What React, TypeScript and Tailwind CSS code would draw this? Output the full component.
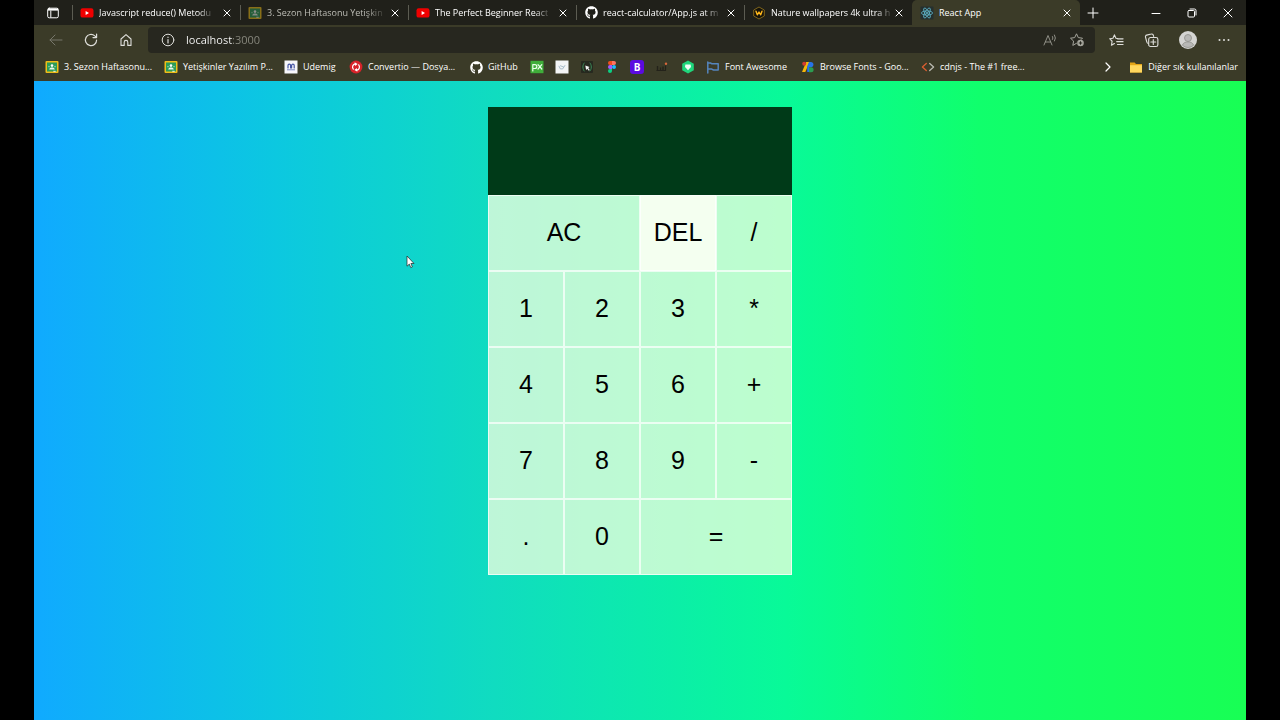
import type { ReactNode } from "react";
import { useState } from "react";
import { FaGithub } from "react-icons/fa";

const stroke = {
  fill: "none",
  stroke: "currentColor",
  strokeLinecap: "round" as const,
  strokeLinejoin: "round" as const,
};

function YoutubeIcon() {
  return (
    <svg viewBox="0 0 14 14" className="size-[14px]">
      <rect x="0.5" y="2.2" width="13" height="9.4" rx="2.2" fill="#f00000" />
      <path d="M5.6 4.9v4l3.4-2z" fill="#fff" />
    </svg>
  );
}

function ClassroomIcon() {
  return (
    <svg viewBox="0 0 14 14" className="size-[14px]">
      <rect x="0.5" y="1" width="13" height="12" rx="1" fill="#f0bd18" />
      <rect x="2" y="2.5" width="10" height="9" fill="#2b9b59" />
      <circle cx="7" cy="5.6" r="1.3" fill="#fff" />
      <path d="M4.2 9.6c0-1.6 1.4-2.2 2.8-2.2s2.8.6 2.8 2.2z" fill="#e8f5e9" />
      <circle cx="4" cy="6.6" r="0.8" fill="#8fd0a5" />
      <circle cx="10" cy="6.6" r="0.8" fill="#8fd0a5" />
      <path d="M8.3 10.8h2.4v.9H8.3z" fill="#fff" />
    </svg>
  );
}

function WallpaperIcon() {
  return (
    <svg viewBox="0 0 14 14" className="size-[14px]">
      <path d="M7 1l5.3 3v6L7 13l-5.3-3V4z" fill="#15130c" stroke="#8a6d1c" strokeWidth="0.9" />
      <path d="M4 5.2l1.300 3.600L7 6l1.700 2.800L10 5.200" {...stroke} stroke="#ffb81c" strokeWidth="1.4" />
    </svg>
  );
}

function ReactIcon() {
  return (
    <svg viewBox="0 0 14 14" className="size-[14px]" fill="none" stroke="#61b8cc" strokeWidth="0.8">
      <rect x="0.5" y="0.5" width="13" height="13" rx="1" fill="#25302f" stroke="none" />
      <ellipse cx="7" cy="7" rx="5.6" ry="2.1" />
      <ellipse cx="7" cy="7" rx="5.6" ry="2.1" transform="rotate(60 7 7)" />
      <ellipse cx="7" cy="7" rx="5.6" ry="2.1" transform="rotate(120 7 7)" />
      <circle cx="7" cy="7" r="1" fill="#61b8cc" stroke="none" />
    </svg>
  );
}

function UdemigIcon() {
  return (
    <svg viewBox="0 0 14 14" className="size-[14px]">
      <rect x="0.5" y="0.5" width="13" height="13" fill="#f7f7fb" />
      <path d="M4 8V5.500a1.300 1.300 0 0 1 2.600 0V8M7.600 8V5.500a1.300 1.300 0 0 1 2.600 0V8" {...stroke} stroke="#4656a5" strokeWidth="1.2" />
      <path d="M3 9.800h8" stroke="#7e8bc8" strokeWidth="1" />
    </svg>
  );
}

function ConvertioIcon() {
  return (
    <svg viewBox="0 0 14 14" className="size-[14px]">
      <circle cx="7" cy="7" r="6.4" fill="#d8232a" />
      <path d="M4.3 9.2A3.4 3.4 0 0 1 6 3.8M9.7 4.8A3.4 3.4 0 0 1 8 10.2" {...stroke} stroke="#fff" strokeWidth="1.2" />
      <path d="M5.6 2.3L8.6 4 6.3 6zM8.4 11.7L5.4 10l2.3-2z" fill="#fff" />
    </svg>
  );
}

function PxIcon() {
  return (
    <svg viewBox="0 0 14 14" className="size-[14px]">
      <rect x="0.5" y="0.8" width="13" height="12.4" fill="#3fae3a" />
      <path d="M2.8 11V4.6h2.1a1.9 1.9 0 0 1 0 3.900H3M8 4.600l3.800 4.400M11.800 4.600L8 9" {...stroke} stroke="#eaffea" strokeWidth="1.2" />
    </svg>
  );
}

function SketchIcon() {
  return (
    <svg viewBox="0 0 14 14" className="size-[14px]">
      <rect x="0.5" y="0.5" width="13" height="13" fill="#f3f5f6" />
      <path d="M4 6.2l1.3 2.7h2.4l2.2-3.400M5.500 5.800l3 1.200" {...stroke} stroke="#9eb6c4" strokeWidth="0.9" />
    </svg>
  );
}

function BracketIcon() {
  return (
    <svg viewBox="0 0 14 14" className="size-[14px]">
      <rect x="1" y="1" width="12" height="12" rx="1" fill="#26291f" />
      <path d="M4.2 3C2.4 5 2.4 9 4.2 11M10 3c1.8 2 1.8 6 0 8" {...stroke} stroke="#3c8a58" strokeWidth="1" />
      <path d="M5.3 5.5l4.300 1.600-1.400.9 1.600 2-1 .8-1.500-2-1.200 1.200z" fill="#f5f5f5" />
    </svg>
  );
}

function FigmaIcon() {
  return (
    <svg viewBox="0 0 14 14" className="size-[14px]">
      <path d="M7 1H5a2 2 0 0 0 0 4h2z" fill="#f24e1e" />
      <path d="M7 1h2a2 2 0 0 1 0 4H7z" fill="#ff7262" />
      <path d="M7 5H5a2 2 0 0 0 0 4h2z" fill="#a259ff" />
      <circle cx="9" cy="7" r="2" fill="#1abcfe" />
      <path d="M7 9H5a2 2 0 1 0 2 2z" fill="#0acf83" />
    </svg>
  );
}

function BootstrapIcon() {
  return (
    <span className="flex size-[14px] items-center justify-center rounded-[3px] bg-[#5b0be0] text-[10px] font-bold text-white">
      B
    </span>
  );
}

function StatsIcon() {
  return (
    <svg viewBox="0 0 14 14" className="size-[14px]">
      <path d="M2.5 6v4.5M5.5 7.5v3M8 6.5v4" stroke="#23221a" strokeWidth="1.4" />
      <path d="M2 10.5h8.5V6" {...stroke} stroke="#23221a" strokeWidth="1.2" />
      <circle cx="11" cy="3.8" r="1.2" fill="#d9683b" />
    </svg>
  );
}

function HexIcon() {
  return (
    <svg viewBox="0 0 14 14" className="size-[14px]">
      <path d="M7 .5l5.8 3.2v6.600L7 13.500l-5.800-3.200V3.700z" fill="#1fd67c" />
      <path d="M4.400 4.500h5.200L10 7l-3 3.200L4 7z" fill="#f2fff8" />
    </svg>
  );
}

function FlagIcon() {
  return (
    <svg viewBox="0 0 14 14" className="size-[14px]">
      <path d="M1.800 2v11M1.800 3h2.700l1.500.8h6.200v6.200H7.500l-1.800-.9H1.800" {...stroke} stroke="#5585bd" strokeWidth="1.500" />
    </svg>
  );
}

function GoogleFontsIcon() {
  return (
    <svg viewBox="0 0 14 14" className="size-[14px]">
      <path d="M5.200 2h3.300L4.300 12H1z" fill="#f5b70a" />
      <circle cx="3.200" cy="3.800" r="2" fill="#d43c2e" />
      <path d="M8 2h1.800a2.600 2.600 0 0 1 0 5.200H8z" fill="#2773e8" />
      <path d="M8 2v10H6.200V6.200z" fill="#2773e8" />
      <path d="M8 7.200h2.100a2.500 2.500 0 0 1 0 5H8z" fill="#2c9c51" />
    </svg>
  );
}

function CdnjsIcon() {
  return (
    <svg viewBox="0 0 14 14" className="size-[14px]">
      <path d="M5.3 3.4L1.4 7l3.9 3.6" {...stroke} stroke="#d95e31" strokeWidth="1.3" />
      <path d="M8.7 3.4L12.6 7l-3.9 3.6" {...stroke} stroke="#b9b9b0" strokeWidth="1.3" />
    </svg>
  );
}

function FolderIcon() {
  return (
    <svg viewBox="0 0 14 14" className="size-[14px]">
      <path d="M1 2.5h4.6L7 4h6v8.5H1z" fill="#e3a417" />
      <path d="M1 5.2h12v7.3H1z" fill="#ffd75e" />
    </svg>
  );
}

function GithubIcon() {
  return <FaGithub className="size-[13px] text-white" />;
}

function CloseIcon() {
  return (
    <svg viewBox="0 0 10 10" className="size-[10px]">
      <path d="M2 2l6 6M8 2L2 8" {...stroke} />
    </svg>
  );
}

const tabs: { title: string; icon: ReactNode; dim?: boolean; active?: boolean }[] = [
  { title: "Javascript reduce() Metodu", icon: <YoutubeIcon /> },
  { title: "3. Sezon Haftasonu Yetişkin", icon: <ClassroomIcon />, dim: true },
  { title: "The Perfect Beginner React", icon: <YoutubeIcon /> },
  { title: "react-calculator/App.js at m", icon: <GithubIcon /> },
  { title: "Nature wallpapers 4k ultra h", icon: <WallpaperIcon /> },
  { title: "React App", icon: <ReactIcon />, active: true },
];

const bookmarks: { label?: string; name: string; icon: ReactNode; width: string }[] = [
  { label: "3. Sezon Haftasonu...", name: "3. Sezon Haftasonu", icon: <ClassroomIcon />, width: "w-[119px]" },
  { label: "Yetişkinler Yazılım P...", name: "Yetişkinler Yazılım", icon: <ClassroomIcon />, width: "w-[120px]" },
  { label: "Udemig", name: "Udemig", icon: <UdemigIcon />, width: "w-[65px]" },
  { label: "Convertio — Dosya...", name: "Convertio", icon: <ConvertioIcon />, width: "w-[120px]" },
  { label: "GitHub", name: "GitHub", icon: <GithubIcon />, width: "w-[61px]" },
  { name: "Pixel", icon: <PxIcon />, width: "w-[25px]" },
  { name: "Sketch", icon: <SketchIcon />, width: "w-[25px]" },
  { name: "Code", icon: <BracketIcon />, width: "w-[25px]" },
  { name: "Figma", icon: <FigmaIcon />, width: "w-[25px]" },
  { name: "Bootstrap", icon: <BootstrapIcon />, width: "w-[25px]" },
  { name: "Stats", icon: <StatsIcon />, width: "w-[26px]" },
  { name: "Hex", icon: <HexIcon />, width: "w-[25px]" },
  { label: "Font Awesome", name: "Font Awesome", icon: <FlagIcon />, width: "w-[95px]" },
  { label: "Browse Fonts - Goo...", name: "Google Fonts", icon: <GoogleFontsIcon />, width: "w-[120px]" },
  { label: "cdnjs - The #1 free...", name: "cdnjs", icon: <CdnjsIcon />, width: "w-[120px]" },
];

function TabStrip() {
  return (
    <div className="flex h-[25px] items-stretch bg-[#20201a]">
      <button aria-label="Tab actions" className="flex w-[38px] items-center justify-center">
        <svg viewBox="0 0 14 14" className="size-[14px] text-white">
          <rect x="1.700" y="2.200" width="10.600" height="9.600" rx="1.500" {...stroke} />
          <path d="M2 3.600h10" stroke="currentColor" strokeWidth="2" />
          <path d="M4.800 4.500v7" stroke="currentColor" />
        </svg>
      </button>
      <div className="flex min-w-0" role="tablist">
        {tabs.map((tab) => (
          <div
            key={tab.title}
            className={
              tab.active
                ? "flex w-[168px] items-center rounded-t-[5px] bg-[#3b3b28] px-2"
                : "flex w-[168px] items-center bg-[linear-gradient(#5c5c52,#5c5c52)] bg-[size:1px_15px] bg-[position:0_50%] bg-no-repeat px-2"
            }
          >
            <button role="tab" aria-selected={!!tab.active} className="flex min-w-0 flex-1 items-center gap-[5px] text-left">
              <span className={tab.dim ? "flex w-[14px] shrink-0 justify-center opacity-50" : "flex w-[14px] shrink-0 justify-center"}>
                {tab.icon}
              </span>
              <span
                className={
                  tab.dim
                    ? "whitespace-nowrap text-[#bdbdb6] [mask-image:linear-gradient(to_right,#000_85%,#0003)]"
                    : tab.active
                      ? "whitespace-nowrap text-white"
                      : "whitespace-nowrap text-white [mask-image:linear-gradient(to_right,#000_88%,#0003)]"
                }
              >
                {tab.title}
              </span>
            </button>
            <button aria-label={`Close ${tab.title}`} className="shrink-0 text-white">
              <CloseIcon />
            </button>
          </div>
        ))}
      </div>
      <button aria-label="New tab" className="flex w-[26px] items-center justify-center text-white">
        <svg viewBox="0 0 12 12" className="size-[12px]">
          <path d="M6 1v10M1 6h10" {...stroke} />
        </svg>
      </button>
      <div className="ml-auto flex text-white">
        <button aria-label="Minimize" className="flex w-9 items-center justify-center">
          <svg viewBox="0 0 10 10" className="size-[10px]">
            <path d="M1 5.5h8" {...stroke} />
          </svg>
        </button>
        <button aria-label="Restore" className="flex w-9 items-center justify-center">
          <svg viewBox="0 0 10 10" className="size-[10px]">
            <rect x="1" y="2.5" width="6.5" height="6.5" rx="1" {...stroke} />
            <path d="M3 1h4.5A1.5 1.5 0 0 1 9 2.5V7" {...stroke} />
          </svg>
        </button>
        <button aria-label="Close window" className="flex w-9 items-center justify-center">
          <svg viewBox="0 0 10 10" className="size-[10px]">
            <path d="M1 1l8 8M9 1L1 9" {...stroke} />
          </svg>
        </button>
      </div>
    </div>
  );
}

function AddressRow() {
  return (
    <div className="flex h-[30px] items-center pl-1 text-[#dededa]">
      <button aria-label="Back" className="flex w-[35px] justify-center text-[#77776b]">
        <svg viewBox="0 0 14 14" className="size-[14px]">
          <path d="M13 7H1M6 2L1 7l5 5" {...stroke} />
        </svg>
      </button>
      <button aria-label="Refresh" className="flex w-[35px] justify-center">
        <svg viewBox="0 0 14 14" className="size-[14px]">
          <path d="M12.6 7A5.6 5.6 0 1 1 10.8 2.9L12.4 4.4M12.6 1v3.600H9" {...stroke} strokeWidth="1.2" />
        </svg>
      </button>
      <button aria-label="Home" className="flex w-[35px] justify-center">
        <svg viewBox="0 0 14 14" className="size-[14px]">
          <path d="M2 6l5-4.400L12 6v6.400H8.800V9.200a1.800 1.800 0 0 0-3.600 0v3.200H2z" {...stroke} strokeWidth="1.1" />
        </svg>
      </button>
      <div className="ml-[5px] flex h-[26px] min-w-0 flex-1 items-center gap-[11px] rounded-[4px] bg-[#27271f] pr-[10px] pl-[13px]">
        <svg viewBox="0 0 14 14" className="size-[14px] shrink-0">
          <circle cx="7" cy="7" r="5.8" {...stroke} />
          <path d="M7 6.500V10M7 4.200v.3" {...stroke} strokeWidth="1.2" />
        </svg>
        <input
          aria-label="Address"
          defaultValue="localhost:3000"
          className="min-w-0 flex-1 bg-[linear-gradient(to_right,#ffffff_46px,#8a8a80_46px)] bg-clip-text text-[11px] text-transparent outline-none"
        />
        <button aria-label="Read aloud" className="text-[#8f8f86]">
          <svg viewBox="0 0 16 14" className="h-[14px] w-[16px]">
            <path d="M2 12L6 2.500 10 12M3.300 9h5.400M10.500 3.500q1 1.500 0 3M12.500 2q1.900 3 0 6" {...stroke} />
          </svg>
        </button>
        <button aria-label="Add to favorites" className="text-[#a5a59c]">
          <svg viewBox="0 0 16 16" className="size-[16px]">
            <path d="M7.500 11.300L3.800 13.400l.8-4.300L1.500 6.200l4.200-.6L7.500 1.800l1.800 3.800 4.200.6-1.200 1.200" {...stroke} />
            <circle cx="11.500" cy="11" r="3.300" fill="currentColor" />
            <path d="M11.500 9.300v3.400M9.800 11h3.400" stroke="#27271f" />
          </svg>
        </button>
      </div>
      <button aria-label="Favorites" className="ml-1 flex w-[35px] justify-center">
        <svg viewBox="0 0 16 16" className="size-[15px]">
          <path d="M9.500 6L7.400 5.600 5.800 2 4.200 5.600.7 6.100l2.600 2.700-.7 4.300 3.200-1.800M9 6.200h6M8.200 9.200H15M9 12.200h6" {...stroke} strokeWidth="1.2" />
        </svg>
      </button>
      <button aria-label="Collections" className="flex w-[35px] justify-center">
        <svg viewBox="0 0 16 16" className="size-[15px]">
          <path d="M4.600 11.200A2 2 0 0 1 3 9.600L1.600 4.400a1.700 1.700 0 0 1 1.200-2.100l5-1.200a1.700 1.700 0 0 1 2.100 1.200l.4 1.400" {...stroke} strokeWidth="1.2" />
          <rect x="5" y="4.800" width="9.800" height="9.600" rx="2" {...stroke} strokeWidth="1.2" />
          <path d="M9.900 7v5.200M7.300 9.600h5.200" {...stroke} strokeWidth="1.2" />
        </svg>
      </button>
      <button aria-label="Profile" className="flex w-[37px] justify-center">
        <svg viewBox="0 0 18 18" className="size-[18px]">
          <circle cx="9" cy="9" r="9" fill="#d4d4d2" />
          <circle cx="9" cy="7" r="3.500" fill="#b8b8b6" stroke="#8f8f8a" strokeWidth="0.8" />
          <path d="M3.400 14.200c.8-2.400 3-3.300 5.600-3.300s4.800.9 5.600 3.300A8 8 0 0 1 3.400 14.200z" fill="#b8b8b6" stroke="#8f8f8a" strokeWidth="0.8" />
        </svg>
      </button>
      <button aria-label="Settings and more" className="mr-1 flex w-[36px] justify-center">
        <svg viewBox="0 0 12 4" className="h-[4px] w-[12px]" fill="currentColor">
          <circle cx="1.500" cy="2" r="1" />
          <circle cx="6" cy="2" r="1" />
          <circle cx="10.500" cy="2" r="1" />
        </svg>
      </button>
    </div>
  );
}

function BookmarkBar() {
  return (
    <nav aria-label="Bookmarks" className="flex h-[26px] items-center pr-2 pb-[2px] pl-[11px] text-white">
      {bookmarks.map((b) => (
        <a
          key={b.name}
          href="#"
          aria-label={b.name}
          className={`${b.width} flex shrink-0 items-center gap-[5px] whitespace-nowrap`}
        >
          <span className="flex w-[14px] shrink-0 justify-center">{b.icon}</span>
          {b.label}
        </a>
      ))}
      <button aria-label="More bookmarks" className="ml-auto">
        <svg viewBox="0 0 8 12" className="h-[12px] w-[8px]">
          <path d="M2 2l4 4-4 4" {...stroke} strokeWidth="1.200" />
        </svg>
      </button>
      <button className="ml-[17px] flex items-center gap-[5px] whitespace-nowrap">
        <FolderIcon />
        Diğer sık kullanılanlar
      </button>
    </nav>
  );
}

const keys: { label: string; wide?: boolean; lit?: boolean }[] = [
  { label: "AC", wide: true },
  { label: "DEL", lit: true },
  { label: "/" },
  { label: "1" },
  { label: "2" },
  { label: "3" },
  { label: "*" },
  { label: "4" },
  { label: "5" },
  { label: "6" },
  { label: "+" },
  { label: "7" },
  { label: "8" },
  { label: "9" },
  { label: "-" },
  { label: "." },
  { label: "0" },
  { label: "=", wide: true },
];

function Calculator() {
  const [current, setCurrent] = useState("");

  function press(label: string) {
    if (label === "AC") setCurrent("");
    else if (label === "DEL") setCurrent(current.slice(0, -1));
    else if (label !== "=") setCurrent(current + label);
  }

  return (
    <div className="grid w-[304px] grid-cols-4 font-['Liberation_Sans',Arial,sans-serif]">
      <output className="col-span-4 flex h-[88px] items-end justify-end overflow-hidden bg-[#003a18] p-2 text-[25px] text-white">
        {current}
      </output>
      {keys.map((key) => (
        <button
          key={key.label}
          onClick={() => press(key.label)}
          className={`${key.wide ? "col-span-2" : ""} ${
            key.lit ? "bg-[#f4fff0]" : "bg-[#f8ffe0]/75"
          } h-[76px] border border-white/70 text-[25px] text-black`}
        >
          {key.label}
        </button>
      ))}
    </div>
  );
}

export default function App() {
  return (
    <div className="flex min-h-screen flex-col bg-black px-[34px] font-['Open_Sans','Noto_Sans',sans-serif] text-[9px]">
      <header className="bg-[#3b3b28]">
        <TabStrip />
        <AddressRow />
        <BookmarkBar />
      </header>
      <main className="relative flex flex-1 items-start justify-center bg-[linear-gradient(to_right,#10aaff,#0cc8e0_20%,#10dcc0_38%,#08fa98_62%,#10ff6c_78%,#18ff54)] pt-[26px]">
        <Calculator />
        <svg viewBox="0 0 9 14" className="absolute top-[174px] left-[372px] h-[14px] w-[9px]">
          <path d="M1 1v10.200l2.300-2.100 1.500 3.500 1.600-.7-1.500-3.400H8z" fill="#fff" stroke="#222" strokeWidth="0.700" />
        </svg>
      </main>
    </div>
  );
}
